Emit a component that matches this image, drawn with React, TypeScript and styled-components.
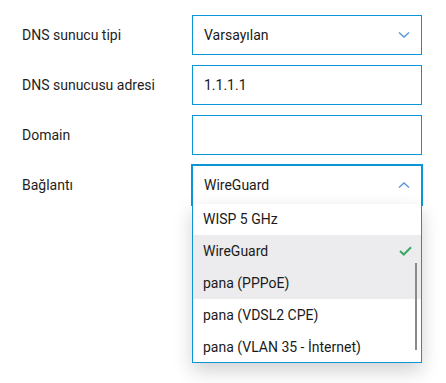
import React from "react";
import styled, {createGlobalStyle} from "styled-components";

const GlobalStyle = createGlobalStyle`
  html, body { margin: 0; padding: 0; background: #fff; }
  body { font-family: Roboto, "Noto Sans", sans-serif; color: #1e1e1e; }
`

const Form = styled.div`
  width: 446px;
  height: 383px;
  padding-top: 15px;
  box-sizing: border-box;
  display: flex;
  flex-direction: column;
  gap: 10px;
`

const Row = styled.div`
  display: grid;
  grid-template-columns: 192px 230px;
  align-items: center;
  height: 40px;
`

const Label = styled.div`
  padding-left: 22px;
  font-size: 14px;
  color: #1e1e1e;
`

const Field = styled.div<{focused?: boolean}>`
  position: relative;
  box-sizing: border-box;
  height: 40px;
  border: 1px solid #0a95d4;
  ${p => p.focused && `box-shadow: 0 0 0 1px #0a95d4; z-index: 2;`}
  display: flex;
  align-items: center;
  justify-content: space-between;
  padding: 0 11px 0 11px;
  font-size: 14px;
  color: #1a1a1a;
  background: #fff;
`

const Chevron = styled.svg`
  width: 12px;
  height: 8px;
  margin-right: 0;
`

const Menu = styled.div`
  position: absolute;
  left: -1px;
  right: -1px;
  top: 38px;
  height: 159px;
  box-sizing: border-box;
  border: 1px solid #0a95d4;
  border-top: none;
  background: #fff;
  overflow: hidden;
  box-shadow: 0 8px 18px rgba(0, 0, 0, 0.18);
  z-index: -1;
`

const Item = styled.div<{active?: boolean}>`
  height: 32px;
  display: flex;
  align-items: center;
  justify-content: space-between;
  padding: 0 9px 0 10px;
  font-size: 14px;
  color: #1a1a1a;
  background: ${p => p.active ? '#ececee' : '#fff'};
`

const Thumb = styled.div`
  position: absolute;
  right: 4px;
  top: 59px;
  width: 2px;
  height: 87px;
  background: #8a8a8a;
`

const Down = () => (
  <Chevron viewBox="0 0 12 8">
    <path d="M1 1.5 L6 6 L11 1.5" fill="none" stroke="#5b93d8" strokeWidth="1.4"/>
  </Chevron>
)

const Up = () => (
  <Chevron viewBox="0 0 12 8">
    <path d="M1 6.5 L6 2 L11 6.5" fill="none" stroke="#5b93d8" strokeWidth="1.4"/>
  </Chevron>
)

const Check = () => (
  <svg width="13" height="10" viewBox="0 0 13 10">
    <path d="M1 5 L4.8 8.5 L12 1.2" fill="none" stroke="#3aa865" strokeWidth="2"/>
  </svg>
)

const items = [
  {name: 'WISP 5 GHz'},
  {name: 'WireGuard', active: true, selected: true},
  {name: 'pana (PPPoE)', active: true},
  {name: 'pana (VDSL2 CPE)'},
  {name: 'pana (VLAN 35 - İnternet)'},
]

export default function App() {
  return (
    <>
      <GlobalStyle/>
      <Form>
        <Row>
          <Label>DNS sunucu tipi</Label>
          <Field>Varsayılan<Down/></Field>
        </Row>
        <Row>
          <Label>DNS sunucusu adresi</Label>
          <Field>1.1.1.1</Field>
        </Row>
        <Row>
          <Label>Domain</Label>
          <Field/>
        </Row>
        <Row>
          <Label>Bağlantı</Label>
          <Field focused>
            WireGuard<Up/>
            <Menu>
              <div style={{marginTop: -1}}>
                {items.map(it => (
                  <Item key={it.name} active={it.active}>
                    {it.name}
                    {it.selected && <Check/>}
                  </Item>
                ))}
              </div>
              <Thumb/>
            </Menu>
          </Field>
        </Row>
      </Form>
    </>
  )
}
